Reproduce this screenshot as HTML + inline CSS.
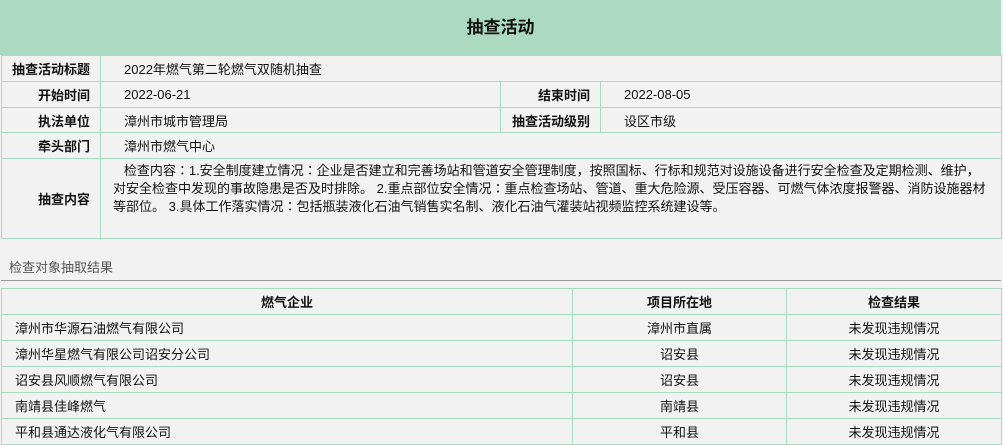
<!DOCTYPE html>
<html><head><meta charset="utf-8"><style>
*{margin:0;padding:0;box-sizing:border-box}
body{width:1003px;height:445px;overflow:hidden;background:#f2f2f2;font-family:"Liberation Sans","Noto Sans CJK SC",sans-serif;font-size:13px;color:#111;position:relative}
.hd{position:absolute;left:0;top:0;width:1001px;height:55px;background:#acd9c1;text-align:center;line-height:55px;font-size:17px;font-weight:bold}
table{position:absolute;border-collapse:collapse;table-layout:fixed}
td{border:1px solid #a7dcc0;padding:0}
.t1{left:1px;top:55px;width:1000px}
.t1 td.l{text-align:right;font-weight:bold;padding-right:10px}
.t1 td.v{padding-left:23px}
.sec{position:absolute;left:9px;top:257px;color:#555;font-size:13px}
.line{position:absolute;left:1px;top:280px;width:1000px;height:1px;background:#9a9a9a}
.t2{left:1px;top:288px;width:1000px}
.t2 td{height:26px;text-align:center}
.t2 td.n{text-align:left;padding-left:13px}
.t2 th{border:1px solid #a7dcc0;height:26px;font-weight:bold}
</style></head><body>
<div class="hd">抽查活动</div>
<table class="t1">
<colgroup><col style="width:99px"><col style="width:400px"><col style="width:100px"><col style="width:401px"></colgroup>
<tr style="height:26px"><td class="l">抽查活动标题</td><td class="v" colspan="3">2022年燃气第二轮燃气双随机抽查</td></tr>
<tr style="height:26px"><td class="l">开始时间</td><td class="v">2022-06-21</td><td class="l">结束时间</td><td class="v">2022-08-05</td></tr>
<tr style="height:25px"><td class="l">执法单位</td><td class="v">漳州市城市管理局</td><td class="l">抽查活动级别</td><td class="v">设区市级</td></tr>
<tr style="height:26px"><td class="l">牵头部门</td><td class="v" colspan="3">漳州市燃气中心</td></tr>
<tr style="height:80px"><td class="l">抽查内容</td><td colspan="3" style="vertical-align:top;padding:3px 14px 0 12px;line-height:18px;font-family:'Liberation Sans','Noto Sans CJK JP',sans-serif">&nbsp;&nbsp;&nbsp;检查内容：1.安全制度建立情况：企业是否建立和完善场站和管道安全管理制度，按照国标、行标和规范对设施设备进行安全检查及定期检测、维护，对安全检查中发现的事故隐患是否及时排除。 2.重点部位安全情况：重点检查场站、管道、重大危险源、受压容器、可燃气体浓度报警器、消防设施器材等部位。 3.具体工作落实情况：包括瓶装液化石油气销售实名制、液化石油气灌装站视频监控系统建设等。</td></tr>
</table>
<div class="sec">检查对象抽取结果</div>
<div class="line"></div>
<table class="t2">
<colgroup><col style="width:571px"><col style="width:214px"><col style="width:215px"></colgroup>
<tr><th>燃气企业</th><th>项目所在地</th><th>检查结果</th></tr>
<tr><td class="n">漳州市华源石油燃气有限公司</td><td>漳州市直属</td><td>未发现违规情况</td></tr>
<tr><td class="n">漳州华星燃气有限公司诏安分公司</td><td>诏安县</td><td>未发现违规情况</td></tr>
<tr><td class="n">诏安县风顺燃气有限公司</td><td>诏安县</td><td>未发现违规情况</td></tr>
<tr><td class="n">南靖县佳峰燃气</td><td>南靖县</td><td>未发现违规情况</td></tr>
<tr><td class="n">平和县通达液化气有限公司</td><td>平和县</td><td>未发现违规情况</td></tr>
</table>
</body></html>
